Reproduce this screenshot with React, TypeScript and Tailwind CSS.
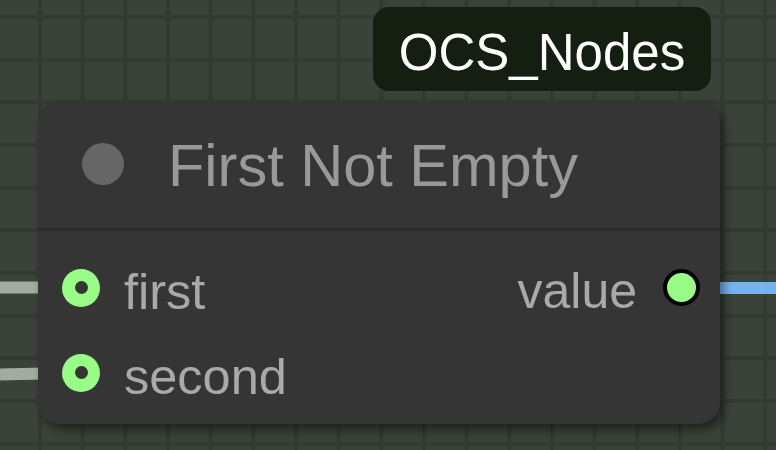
export default function App() {
  return (
    <div className="relative w-[776px] h-[450px] overflow-hidden bg-[#3b4239] bg-[linear-gradient(to_right,#333a31_4px,transparent_4px),linear-gradient(to_bottom,#333a31_4px,transparent_4px)] bg-[size:42.67px_42.67px] bg-[position:38px_15px] font-['Liberation_Sans',Arial,sans-serif]">
      {/* links between nodes */}
      <svg className="absolute inset-0" width="776" height="450" viewBox="0 0 776 450">
        <path d="M0 287.5 L44 287.5" stroke="#a2ac9f" strokeWidth="12" fill="none" />
        <path d="M0 374.5 L44 373.5" stroke="#a2ac9f" strokeWidth="12" fill="none" />
        <path d="M716 288 L776 288" stroke="#76b3ee" strokeWidth="12" fill="none" />
      </svg>

      <div className="absolute left-[373px] top-[7px] w-[338px] h-[84px] rounded-[16px] bg-[#141f12] flex items-center justify-center pt-[8px] text-[51px] leading-[1.15] text-white">
        OCS_Nodes
      </div>

      <div className="absolute left-[38px] top-[100px] w-[682px] h-[324px] rounded-[22px] bg-[#353535] shadow-[4px_6px_10px_rgba(0,0,0,0.45)] flex flex-col">
        <div className="h-[131px] shrink-0 flex items-center pl-[44px] border-b-[3px] border-[#2b2b2b]">
          <div className="w-[42px] h-[42px] rounded-full bg-[#666666]" />
          <span className="ml-[44px] pt-[4px] text-[59.5px] leading-[1.15] text-[#999999]">First Not Empty</span>
        </div>
        <div className="pt-[14px] flex flex-col">
          <div className="h-[85px] flex items-center justify-between pl-[24px] pr-[20px]">
            <Input label="first" />
            <div className="flex items-center">
              <span className="pt-[9px] text-[50px] leading-[1.15] text-[#a9a9a9]">value</span>
              <div className="ml-[26px] w-[37px] h-[37px] rounded-full border-[4px] border-black bg-[#98fc87]" />
            </div>
          </div>
          <div className="h-[85px] flex items-center pl-[24px] pr-[20px]">
            <Input label="second" />
          </div>
        </div>
      </div>
    </div>
  );
}

function Input({ label }: { label: string }) {
  return (
    <div className="flex items-center">
      <div className="w-[38px] h-[38px] rounded-full bg-[#98fc87] flex items-center justify-center">
        <div className="w-[13px] h-[13px] rounded-full bg-[#353535]" />
      </div>
      <span className="ml-[24px] pt-[9px] text-[50.5px] leading-[1.15] text-[#a9a9a9]">{label}</span>
    </div>
  );
}
